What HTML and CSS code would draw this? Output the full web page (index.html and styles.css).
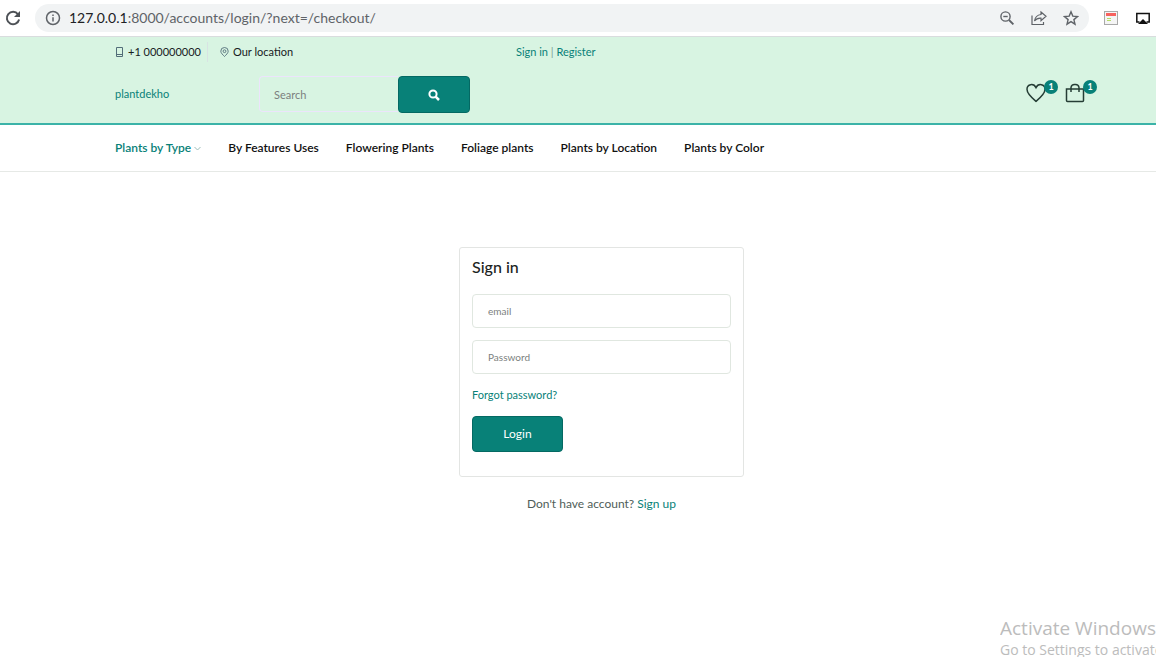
FILE: index.html
```html
<!DOCTYPE html>
<html lang="en">
<head>
<meta charset="utf-8">
<title>Sign in</title>
<link rel="stylesheet" href="styles.css">
</head>
<body>
<div class="browser">
  <button class="icon-btn" aria-label="Reload"><svg width="18" height="18" viewBox="0 0 18 18" fill="none" stroke="#4d5156" stroke-width="2"><path d="M14 5.3A6.2 6.2 0 1 0 15.1 10.5"/><path d="M16 2v6h-6z" fill="#4d5156" stroke="none"/></svg></button>
  <div class="address">
    <svg width="16" height="16" viewBox="0 0 16 16" fill="none" stroke="#5f6368" stroke-width="1.5"><circle cx="8" cy="8" r="6.5"/><path d="M8 7.2v4.3M8 4.4v1.7"/></svg>
    <span class="url"><b>127.0.0.1</b>:8000/accounts/login/?next=/checkout/</span>
    <button class="icon-btn" aria-label="Zoom"><svg width="16" height="16" viewBox="0 0 16 16" fill="none" stroke="#5f6368" stroke-width="1.4"><circle cx="6.5" cy="6.5" r="4.6"/><path d="M4.3 6.5h4.4"/><path d="M10 10l4.4 4.4" stroke-width="1.9"/></svg></button>
    <button class="icon-btn" aria-label="Share"><svg width="16" height="16" viewBox="0 0 16 16" fill="none" stroke="#5f6368" stroke-width="1.2"><path d="M1 5.500v9h11.500v-2.500"/><path d="M10 2l5 4.300-5 4.300V8.200C7 8 5 9 3.500 11 4 7.500 6 5 10 4.500z"/></svg></button>
    <button class="icon-btn" aria-label="Bookmark"><svg width="16" height="16" viewBox="0 0 16 16" fill="none" stroke="#5f6368" stroke-width="1.4"><path d="M8 1.800l1.800 4.300 4.700.4-3.600 3.100 1.100 4.600L8 11.700l-4 2.500 1.100-4.600L1.500 6.500l4.700-.4z"/></svg></button>
  </div>
  <button class="icon-btn" aria-label="Reader"><svg width="16" height="16" viewBox="0 0 16 16"><rect x="1.500" y="1.500" width="13" height="13" fill="#f5f5f5" stroke="#a9a9a9"/><path d="M3 3h10v3H3z" fill="#f7625f"/><path d="M4 8.500h4M4 10.500h4" stroke="#b4dc68"/></svg></button>
  <button class="icon-btn" aria-label="Cast"><svg width="16" height="16" viewBox="0 0 16 16"><path d="M4.500 12H1.800V3.500h12.400V12h-2.700" fill="none" stroke="#111" stroke-width="1.500"/><path d="M8 9l5 5H3z" fill="#111"/></svg></button>
</div>

<header class="header">
  <div class="topline">
    <div class="contact">
      <a href="tel:+1000000000"><svg width="9" height="10" viewBox="0 0 9 10" fill="none" stroke="#526d78"><path d="M1.500.5h6v9h-6zM1.500 7.500h6"/></svg>+1 000000000</a>
      <a href="#location"><svg width="9" height="10" viewBox="0 0 9 10" fill="none" stroke="#526d78" stroke-width=".9"><path d="M4.500 9.500C3 8 .8 6 .8 4.200a3.700 3.700 0 0 1 7.400 0C8.200 6 6 8 4.500 9.500z"/><circle cx="4.500" cy="4.200" r="1.400"/></svg>Our location</a>
    </div>
    <div class="account"><a href="#signin">Sign in</a> | <a href="#register">Register</a></div>
  </div>
  <div class="midline">
    <a class="brand" href="#home">plantdekho</a>
    <form class="search">
      <input type="text" placeholder="Search" aria-label="Search">
      <button type="button" aria-label="Submit search"><svg width="12" height="12" viewBox="0 0 12 12" fill="none" stroke="#fff" stroke-width="2"><circle cx="5" cy="5" r="3.600"/><path d="M7.600 7.600L11 11" stroke-width="2.500"/></svg></button>
    </form>
    <div class="tools">
      <a href="#wishlist" aria-label="Wishlist"><svg width="20" height="20" viewBox="0 0 20 20" fill="none" stroke="#253d35" stroke-width="1.500"><path d="M10 18.300C6 15 1 11 1 6.300 1 .8 7.800 0 10 4.600 12.200 0 19 .8 19 6.300 19 11 14 15 10 18.300z"/></svg><span class="badge">1</span></a>
      <a href="#cart" aria-label="Cart"><svg width="20" height="20" viewBox="0 0 20 20" fill="none" stroke="#253d35" stroke-width="1.500"><path d="M1.500 6h17v11.500a1 1 0 0 1-1 1h-15a1 1 0 0 1-1-1z"/><path d="M6 9V4.500a3.500 3.500 0 0 1 3.500-3h1A3.500 3.500 0 0 1 14 4.500V9"/></svg><span class="badge">1</span></a>
    </div>
  </div>
</header>

<nav class="nav">
  <a class="active" href="#type">Plants by Type<svg width="7" height="5" viewBox="0 0 7 5" fill="none" stroke="#9dbdb9"><path d="M.5 1l3 3 3-3"/></svg></a>
  <a href="#features">By Features Uses</a>
  <a href="#flowering">Flowering Plants</a>
  <a href="#foliage">Foliage plants</a>
  <a href="#by-location">Plants by Location</a>
  <a href="#color">Plants by Color</a>
</nav>

<main class="main">
  <form class="card">
    <h1>Sign in</h1>
    <input type="email" placeholder="email" aria-label="email">
    <input type="password" placeholder="Password" aria-label="Password">
    <a class="forgot" href="#forgot">Forgot password?</a>
    <button type="button">Login</button>
  </form>
  <p class="signup">Don't have account? <a href="#signup">Sign up</a></p>
</main>

<aside class="watermark">
  <p class="watermark-title">Activate Windows</p>
  <p>Go to Settings to activate Windows.</p>
</aside>
</body>
</html>
```
FILE: styles.css
```css
* { box-sizing: border-box; }
body {
  margin: 0;
  min-height: 100vh;
  position: relative;
  background: #fff;
  color: #4f5d58;
  font: 12px/20px Lato, "Liberation Sans", sans-serif;
}
a { color: #088178; text-decoration: none; }
button, input { font: inherit; }
button { cursor: pointer; }
p, h1 { margin: 0; }
svg { flex: none; display: block; }

.browser {
  display: flex;
  align-items: center;
  height: 37px;
  padding: 0 5px 0 4px;
  gap: 14px;
  border-bottom: 1px solid #d9dcde;
}
.icon-btn { padding: 0; border: 0; background: none; }
.browser > .icon-btn:first-child { margin-right: -1px; }
.browser > .icon-btn:last-child { margin-left: 2px; }
.address {
  flex: 1;
  display: flex;
  align-items: center;
  gap: 16px;
  height: 28px;
  padding: 0 10px;
  border-radius: 14px;
  background: #f1f3f4;
}
.url {
  flex: 1;
  margin-left: -8px;
  color: #5f6368;
  font: 14px/20px Lato, sans-serif;
}
.url b { color: #202124; font-weight: 400; }

.header {
  padding: 0 60px 0 115px;
  background: #d8f4e2;
  border-bottom: 2px solid #3bb3a8;
  font-size: 11px;
}
.topline { display: flex; padding-top: 5px; height: 30px; }
.contact { display: flex; width: 401px; }
.contact a {
  display: flex;
  align-items: center;
  gap: 4px;
  color: #17201d;
  height: 20px;
}
.contact a + a { margin-left: 6px; padding-left: 12px; border-left: 1px solid #d8e3e3; }
.account { color: #7e9c96; }
.midline { display: flex; align-items: center; height: 56px; padding-bottom: 1px; }
.brand { width: 144px; padding-bottom: 2px; }
.search { display: flex; width: 211px; height: 37px; }
.search input {
  flex: 1;
  min-width: 0;
  height: 36px;
  padding: 0 14px;
  border: 1px solid #ece4fc;
  border-right: 0;
  border-radius: 4px 0 0 4px;
  background: transparent;
}
input::placeholder { color: #7b7f7e; opacity: 1; }
.search button {
  display: grid;
  place-items: center;
  width: 72px;
  border: 1px solid #046963;
  border-radius: 4px;
  background: #088178;
}
.tools { display: flex; gap: 19px; margin-left: auto; padding: 0 11px 4px 0; }
.tools a { position: relative; }
.badge {
  position: absolute;
  top: -3px;
  right: -12px;
  width: 14px;
  height: 14px;
  border-radius: 50%;
  background: #088178;
  color: #fff;
  font-size: 9px;
  font-weight: 700;
  line-height: 14px;
  text-align: center;
}

.nav {
  display: flex;
  align-items: center;
  gap: 27px;
  height: 47px;
  padding: 0 115px;
  border-bottom: 1px solid #e6e9e6;
  font-weight: 600;
  white-space: nowrap;
}
.nav a { display: flex; align-items: center; gap: 3px; color: #111; }
.nav .active { color: #088178; }

.main {
  display: flex;
  flex-direction: column;
  align-items: center;
  gap: 17px;
  padding: 75px 0 0 47px;
}
.card {
  display: flex;
  flex-direction: column;
  align-items: flex-start;
  gap: 12px;
  width: 285px;
  max-width: 100%;
  padding: 9px 12px 24px;
  border: 1px solid #e3e5e3;
  border-radius: 3px;
}
.card h1 { margin-bottom: 5px; color: #1c2321; font-size: 16px; font-weight: 500; line-height: 20px; }
.card input {
  width: 100%;
  height: 34px;
  padding: 0 15px;
  border: 1px solid #e0e7e0;
  border-radius: 4px;
  font-size: 10px;
}
.forgot { font-size: 11px; line-height: 18px; }
.card button {
  width: 91px;
  height: 36px;
  border: 1px solid #046963;
  border-radius: 4px;
  background: #088178;
  color: #fff;
}

.watermark {
  position: absolute;
  right: 0;
  bottom: 0;
  width: 156px;
  height: 40px;
  overflow: hidden;
  white-space: nowrap;
  color: #bcbcbc;
  font: 14px/22px "Open Sans", sans-serif;
}
.watermark-title { font-size: 19px; }
```
